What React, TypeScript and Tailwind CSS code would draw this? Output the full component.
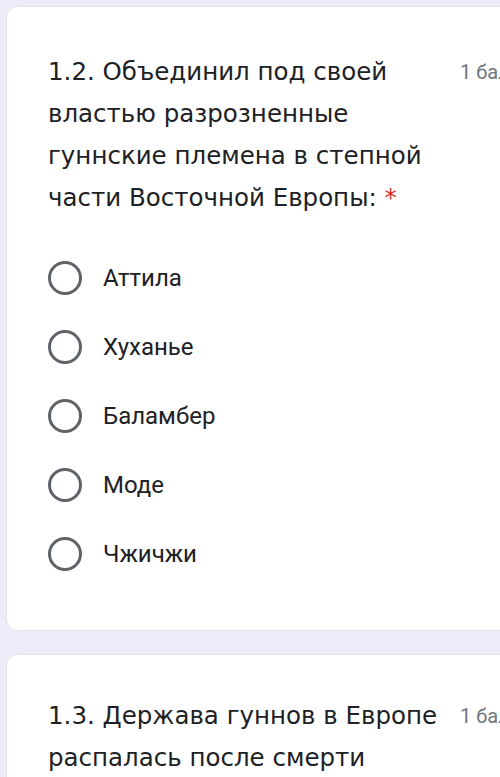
import React from "react";

const options = ["Аттила", "Хуханье", "Баламбер", "Моде", "Чжичжи"];

function Radio() {
  return (
    <span className="block w-[34px] h-[34px] rounded-full border-[3px] border-[#5f6368] shrink-0" />
  );
}

const titleFont = { fontFamily: "'DejaVu Sans', 'Open Sans', sans-serif" };

export default function App() {
  return (
    <div className="w-[500px] h-[777px] overflow-hidden bg-[#f0ebf8]">
      <div className="pt-[6px] pl-[6px] flex flex-col gap-[23px]">
        <div className="w-[520px] bg-white rounded-[12px] border border-[#e3e1ea] pt-[44px] pb-[42px] pl-[41px]">
          <div className="flex items-start">
            <div className="w-[412px] text-[24.5px] leading-[42px] text-[#202124]" style={titleFont}>
              <div className="whitespace-nowrap">1.2. Объединил под своей</div>
              <div className="whitespace-nowrap">властью разрозненные</div>
              <div className="whitespace-nowrap">гуннские племена в степной</div>
              <div className="whitespace-nowrap">
                части Восточной Европы: <span className="text-[#d93025]">*</span>
              </div>
            </div>
            <div
              className="leading-[42px] text-[20px] text-[#70757a] whitespace-nowrap"
              style={{ fontFamily: "Roboto, sans-serif" }}
            >
              1 балл
            </div>
          </div>
          <div className="mt-[24px] flex flex-col">
            {options.map((o) => (
              <div key={o} className="h-[69px] flex items-center">
                <Radio />
                <span
                  className="ml-[21px] text-[24px] text-[#202124]"
                  style={{ fontFamily: "Roboto, sans-serif" }}
                >
                  {o}
                </span>
              </div>
            ))}
          </div>
        </div>
        <div className="w-[520px] bg-white rounded-[12px] border border-[#e3e1ea] pt-[40px] pb-[42px] pl-[41px]">
          <div className="flex items-start">
            <div className="w-[412px] text-[24.5px] leading-[42px] text-[#202124]" style={titleFont}>
              <div className="whitespace-nowrap">1.3. Держава гуннов в Европе</div>
              <div className="whitespace-nowrap">распалась после смерти</div>
            </div>
            <div
              className="leading-[42px] text-[20px] text-[#70757a] whitespace-nowrap"
              style={{ fontFamily: "Roboto, sans-serif" }}
            >
              1 балл
            </div>
          </div>
        </div>
      </div>
    </div>
  );
}
